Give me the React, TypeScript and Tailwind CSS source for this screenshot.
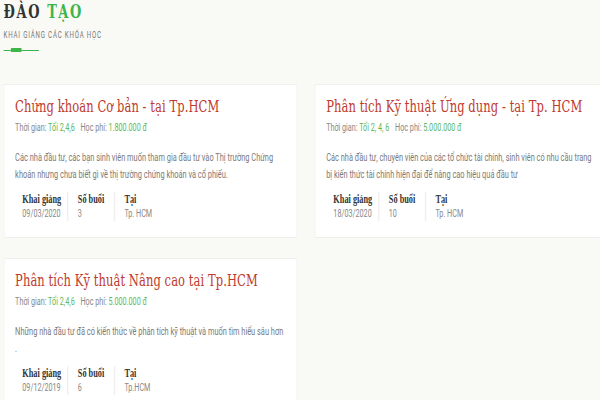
import React from 'react';

type Course = {
  title: string;
  time: string;
  fee: string;
  desc: string;
  start: string;
  sessions: string;
  place: string;
};

const COURSES: Course[] = [
  {
    title: 'Chứng khoán Cơ bản - tại Tp.HCM',
    time: 'Tối 2,4,6',
    fee: '1.800.000 đ',
    desc: 'Các nhà đầu tư, các bạn sinh viên muốn tham gia đầu tư vào Thị trường Chứng\nkhoán nhưng chưa biết gì về thị trường chứng khoán và cổ phiếu.',
    start: '09/03/2020',
    sessions: '3',
    place: 'Tp. HCM',
  },
  {
    title: 'Phân tích Kỹ thuật Ứng dụng - tại Tp. HCM',
    time: 'Tối 2, 4, 6',
    fee: '5.000.000 đ',
    desc: 'Các nhà đầu tư, chuyên viên của các tổ chức tài chính, sinh viên có nhu cầu trang\nbị kiến thức tài chính hiện đại để nâng cao hiệu quả đầu tư',
    start: '18/03/2020',
    sessions: '10',
    place: 'Tp. HCM',
  },
  {
    title: 'Phân tích Kỹ thuật Nâng cao tại Tp.HCM',
    time: 'Tối 2,4,6',
    fee: '5.000.000 đ',
    desc: 'Những nhà đầu tư đã có kiến thức về phân tích kỹ thuật và muốn tìm hiểu sâu hơn\n.',
    start: '09/12/2019',
    sessions: '6',
    place: 'Tp.HCM',
  },
];

const serif = 'font-["DejaVu_Serif",serif]';
const label = 'font-["Liberation_Serif",serif] text-[11.5px] leading-[15px] font-bold text-[#333]';
const value = 'text-[10px] leading-[14px] text-[#888]';

const CourseCard = ({ c }: { c: Course }) => (
  <div className="bg-white border border-[#efefeb] pl-[15px] pr-[10px] pt-[12px] pb-[16px]">
    <h3 className={`${serif} text-[16px] leading-[20px] text-[#c0392b] tracking-[0.1px] whitespace-nowrap`}>
      {c.title}
    </h3>
    <p className="mt-[4px] text-[10px] leading-[14px] text-[#888]">
      Thời gian: <span className="text-[#5cb85c]">{c.time}</span>
      <span className="ml-[8px]">Học phí: </span>
      <span className="text-[#5cb85c]">{c.fee}</span>
    </p>
    <p className="mt-[14px] text-[10.3px] leading-[17px] text-[#7a7a7a] whitespace-pre-line">{c.desc}</p>
    {/* start / sessions / place */}
    <div className="mt-[9px] flex">
      <div className="pl-[10px] pr-[8px]">
        <div className={label}>Khai giảng</div>
        <div className={value}>{c.start}</div>
      </div>
      <div className="px-[13px] border-l-2 border-[#f0f0f0]">
        <div className={label}>Số buổi</div>
        <div className={value}>{c.sessions}</div>
      </div>
      <div className="px-[13px] border-l-2 border-[#f0f0f0]">
        <div className={label}>Tại</div>
        <div className={value}>{c.place}</div>
      </div>
    </div>
  </div>
);

export default function App() {
  return (
    <div className="w-full min-h-[400px] overflow-hidden bg-[#f9f9f5] font-['Roboto',sans-serif]">
      <div className="w-[840px] origin-top-left scale-x-72 pl-[5px]">
        <h1 className={`${serif} text-[18px] leading-[24px] font-bold tracking-[2.2px] text-[#333]`}>
          ĐÀO <span className="text-[#3db54a]">TẠO</span>
        </h1>
        <p className="mt-[5px] text-[8.5px] leading-[12px] uppercase tracking-[1.15px] text-[#777]">
          Khai giảng các khóa học
        </p>
        <div className="mt-[7px] flex items-center">
          <div className="w-[10px] h-[1px] bg-[#3db54a]" />
          <div className="w-[15px] h-[4px] bg-[#3db54a] rounded-[1px]" />
          <div className="w-[24px] h-[1px] bg-[#3db54a]" />
        </div>
        <div className="mt-[32px] grid grid-cols-[408px_408px] gap-x-[24px] gap-y-[20px] items-start">
          {COURSES.map((c) => (
            <CourseCard key={c.title} c={c} />
          ))}
        </div>
      </div>
    </div>
  );
}
